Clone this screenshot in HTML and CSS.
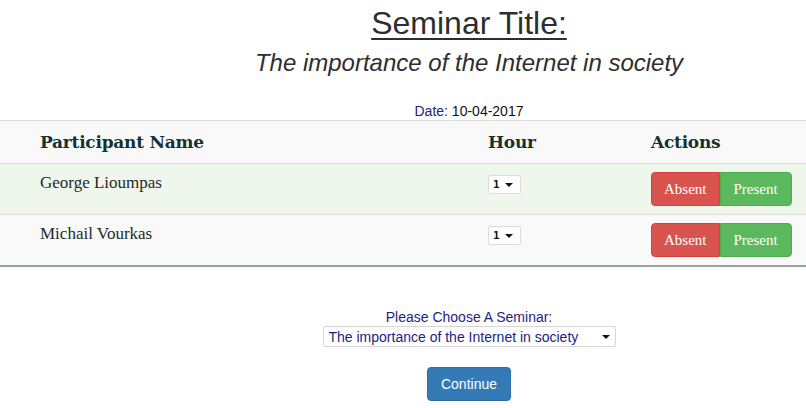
FILE: index.html
```html
<!DOCTYPE html>
<html lang="en">
<head>
<meta charset="utf-8">
<title>Seminar Attendance</title>
<link rel="stylesheet" href="styles.css">
</head>
<body>
<header class="intro">
  <h1 class="title">Seminar Title:</h1>
  <h2 class="subtitle">The importance of the Internet in society</h2>
  <p class="date"><span class="date-label">Date:</span> 10-04-2017</p>
</header>

<div class="table">
  <div class="row head">
    <div class="cell">Participant Name</div>
    <div class="cell">Hour</div>
    <div class="cell">Actions</div>
  </div>
  <div class="row body active">
    <div class="cell name">George Lioumpas</div>
    <div class="cell"><span class="mini-select"><select class="mini"><option>1</option></select></span></div>
    <div class="cell"><div class="btn-group"><button class="btn absent">Absent</button><button class="btn present">Present</button></div></div>
  </div>
  <div class="row body last">
    <div class="cell name">Michail Vourkas</div>
    <div class="cell"><span class="mini-select"><select class="mini"><option>1</option></select></span></div>
    <div class="cell"><div class="btn-group"><button class="btn absent">Absent</button><button class="btn present">Present</button></div></div>
  </div>
</div>

<form class="chooser">
  <label class="choose-label" for="seminar">Please Choose A Seminar:</label>
  <span class="seminar-select"><select id="seminar" class="seminar"><option>The importance of the Internet in society</option></select></span>
  <button type="button" class="continue">Continue</button>
</form>
</body>
</html>
```

FILE: styles.css
```css
* { box-sizing: border-box; }

body {
  margin: 0;
  background: #fff;
  font-family: "Liberation Sans", Arial, sans-serif;
  color: #333;
}

.intro {
  padding-left: 132px;
  text-align: center;
}

.title {
  margin: 5px 0 0;
  font-size: 32px;
  line-height: 36px;
  font-weight: normal;
  text-decoration: underline;
  text-decoration-thickness: 2px;
  text-underline-offset: 4px;
  color: #2e2e2e;
}

.subtitle {
  margin: 8px 0 0;
  font-size: 24px;
  line-height: 28px;
  font-weight: normal;
  font-style: italic;
  color: #2e2e2e;
}

.date {
  margin: 25px 0 0;
  font-size: 14px;
  line-height: 18px;
  color: #111;
}

.date-label { color: #22227a; }

.table {
  border-top: 1px solid #ddd;
  border-bottom: 2px solid #9aa3a3;
}

.row {
  display: grid;
  grid-template-columns: 448px 163px 1fr;
}

.cell { padding-left: 40px; }

.head {
  background: #f9f9f9;
  border-bottom: 1px solid #ddd;
  font-family: "DejaVu Serif", Georgia, serif;
  font-weight: bold;
  font-size: 17px;
  letter-spacing: -0.25px;
  line-height: 24px;
  color: #163130;
}

.head .cell { padding-top: 9px; padding-bottom: 9px; }

.body {
  background: #f9f9f9;
  font-family: "Liberation Serif", Georgia, serif;
  font-size: 17px;
  line-height: 22px;
  color: #1e2a2a;
}

.body.active { background: #eff7ed; border-bottom: 1px solid #ddd; }

.body .cell { padding-top: 8px; padding-bottom: 8px; }

.mini-select {
  position: relative;
  display: inline-block;
}

.mini {
  appearance: none;
  -webkit-appearance: none;
  display: block;
  width: 33px;
  height: 19px;
  margin: 0;
  padding: 0 0 0 4px;
  border: 1px solid #dcdcdc;
  border-radius: 2px;
  background: #fff;
  font-family: "DejaVu Sans Mono", monospace;
  font-size: 11px;
  font-weight: bold;
  color: #111;
}

.mini-select::after {
  content: "";
  position: absolute;
  right: 8px;
  top: 8px;
  border-left: 4px solid transparent;
  border-right: 4px solid transparent;
  border-top: 4px solid #111;
  pointer-events: none;
}

.btn-group { display: flex; }

.btn {
  margin: 0;
  height: 34px;
  padding: 6px 12px;
  border: 1px solid transparent;
  font-family: "Liberation Serif", Georgia, serif;
  font-size: 15px;
  line-height: 20px;
  color: #fff;
}

.absent {
  background: #d9534f;
  border-color: #d43f3a;
  border-radius: 4px 0 0 4px;
}

.present {
  background: #5cb85c;
  border-color: #4cae4c;
  border-radius: 0 4px 4px 0;
  padding: 6px 13px 6px 13px;
}

.chooser {
  padding-left: 132px;
  margin-top: 41px;
  display: flex;
  flex-direction: column;
  align-items: center;
}

.choose-label {
  font-size: 14px;
  line-height: 18px;
  color: #1e1e82;
}

.seminar-select {
  position: relative;
  display: block;
}

.seminar {
  appearance: none;
  -webkit-appearance: none;
  display: block;
  width: 293px;
  height: 21px;
  margin: 0;
  padding: 0 0 0 5px;
  border: 1px solid #d6d6d6;
  border-radius: 2px;
  background: #fff;
  font-family: "Liberation Sans", Arial, sans-serif;
  font-size: 14px;
  color: #1e1e82;
}

.seminar-select::after {
  content: "";
  position: absolute;
  right: 6px;
  top: 9px;
  border-left: 4px solid transparent;
  border-right: 4px solid transparent;
  border-top: 4px solid #111;
  pointer-events: none;
}

.continue {
  margin-top: 20px;
  height: 34px;
  padding: 6px 13px;
  border: 1px solid #2e6da4;
  border-radius: 4px;
  background: #337ab7;
  font-family: "Liberation Sans", Arial, sans-serif;
  font-size: 14px;
  line-height: 20px;
  color: #fff;
}
```
